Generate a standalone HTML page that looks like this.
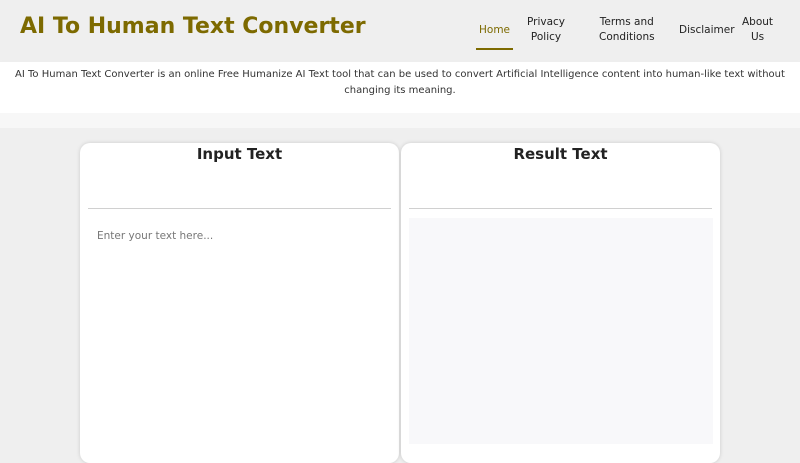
<!DOCTYPE html>
<html><head><style>
*{box-sizing:border-box;margin:0;padding:0}
body{width:800px;height:450px;overflow:hidden;background:#efefef;font-family:"DejaVu Sans","Liberation Sans",sans-serif;position:relative}
.hdr{position:absolute;left:0;top:0;width:800px;height:62px;background:#efefef}
.title{position:absolute;left:20px;top:14px;font-size:22px;font-weight:bold;color:#7d6a00}
.nav a{position:absolute;font-size:10.5px;color:#222;text-align:center;line-height:15px}
.band{position:absolute;left:0;top:62px;width:800px;height:51px;background:#fff;box-shadow:0 2px 4px rgba(0,0,0,.08);text-align:center;font-size:10px;color:#333;line-height:16px;padding-top:5px;white-space:nowrap}
.gap{position:absolute;left:0;top:113px;width:800px;height:15px;background:#f7f7f7}
.card{position:absolute;top:143px;width:319px;height:320px;background:#fff;border-radius:10px;box-shadow:0 0 4px rgba(0,0,0,.15)}
.card h2{text-align:center;font-size:15px;font-weight:bold;color:#222;margin-top:2px}
.line{position:absolute;left:8px;right:8px;top:65px;border-top:1px solid #d0d0d0}
.ta{position:absolute;left:8px;right:7px;top:75px;height:226px;font-size:10.5px;color:#777;padding:12px 9px}
</style></head><body>
<div class="hdr">
<div class="title">AI To Human Text Converter</div>
<div class="nav">
<a style="left:479px;top:23px;color:#7d6a00">Home</a>
<div style="position:absolute;left:476px;top:48px;width:37px;height:2px;background:#7d6a00"></div>
<a style="left:527px;top:15px">Privacy<br>Policy</a>
<a style="left:599px;top:15px">Terms and<br>Conditions</a>
<a style="left:679px;top:23px">Disclaimer</a>
<a style="left:742px;top:15px">About<br>Us</a>
</div></div>
<div class="band">AI To Human Text Converter is an online Free Humanize AI Text tool that can be used to convert Artificial Intelligence content into human-like text without<br>changing its meaning.</div>
<div class="gap"></div>
<div class="card" style="left:80px"><h2>Input Text</h2><div class="line"></div><div class="ta">Enter your text here...</div></div>
<div class="card" style="left:401px"><h2>Result Text</h2><div class="line"></div><div class="ta" style="background:#f8f8fa"></div></div>
</body></html>
